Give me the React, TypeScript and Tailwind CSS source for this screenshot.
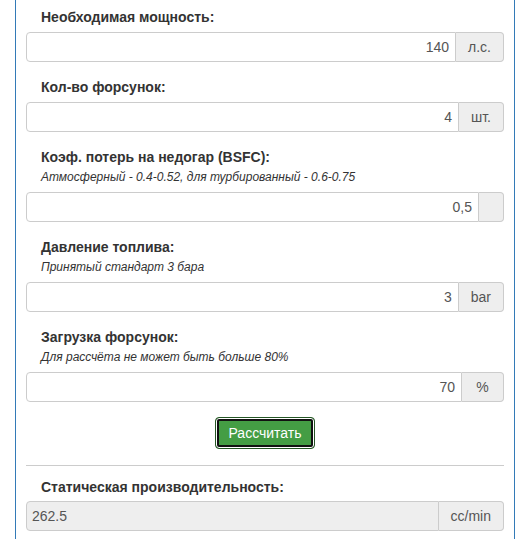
type Field = {
  label: string
  hint?: string
  value: string
  unit: string
  unitClass?: string
}

const fields: Field[] = [
  { label: 'Необходимая мощность:', value: '140', unit: 'л.с.' },
  { label: 'Кол-во форсунок:', value: '4', unit: 'шт.' },
  {
    label: 'Коэф. потерь на недогар (BSFC):',
    hint: 'Атмосферный - 0.4-0.52, для турбированный - 0.6-0.75',
    value: '0,5',
    unit: '',
  },
  { label: 'Давление топлива:', hint: 'Принятый стандарт 3 бара', value: '3', unit: 'bar' },
  {
    label: 'Загрузка форсунок:',
    hint: 'Для рассчёта не может быть больше 80%',
    value: '70',
    unit: '%',
    unitClass: 'w-[42px]',
  },
]

function InputGroup({ value, unit, unitClass, disabled }: { value: string; unit: string; unitClass?: string; disabled?: boolean }) {
  return (
    <div className="flex h-[30px] text-[14px] text-[#555]">
      <div
        className={
          disabled
            ? 'flex-1 flex items-center px-[5px] bg-[#eee] border border-[#ccc] rounded-l-[4px]'
            : 'flex-1 flex items-center justify-end px-[6px] bg-white border border-[#ccc] rounded-l-[4px]'
        }
      >
        {value}
      </div>
      <div
        className={`flex items-center justify-center px-3 bg-[#eee] border border-l-0 border-[#ccc] rounded-r-[4px] ${unitClass ?? ''}`}
      >
        {unit}
      </div>
    </div>
  )
}

export default function App() {
  return (
    <div className="w-[523px] h-[539px] bg-white overflow-hidden font-['Liberation_Sans',Arial,sans-serif] text-[#333]">
      <div className="ml-[15px] w-[500px] h-full border-x border-[#337ab7] px-[10px] pt-[7px]">
        {fields.map((f) => (
          <div key={f.label} className="mb-[15px]">
            <div className="pl-[15px] mb-[5px]">
              <div className="text-[14px] leading-[20px] font-bold">{f.label}</div>
              {f.hint && <div className="text-[12px] leading-[20px] italic">{f.hint}</div>}
            </div>
            <InputGroup value={f.value} unit={f.unit} unitClass={f.unitClass} />
          </div>
        ))}

        <div className="flex justify-center">
          <button className="h-[32px] px-3 text-[14px] text-white bg-[#449d44] border border-[#255625] rounded-[4px] shadow-[inset_0_0_0_1px_#fff,inset_0_0_0_3px_#111]">
            Рассчитать
          </button>
        </div>

        <hr className="mt-[16px] mb-[11px] border-t border-[#ccc]" />

        <div className="pl-[15px] mb-[4px] text-[14px] leading-[20px] font-bold">Статическая производительность:</div>
        <InputGroup value="262.5" unit="cc/min" disabled />
      </div>
    </div>
  )
}
